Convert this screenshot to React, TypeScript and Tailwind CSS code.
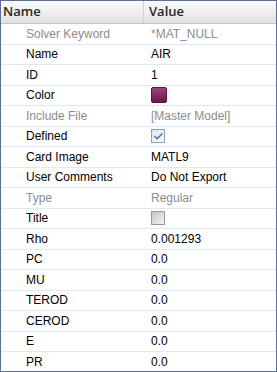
import { Check } from 'lucide-react'

type Row = {
  label: string
  value?: string
  muted?: boolean
  kind?: 'text' | 'color' | 'checked' | 'unchecked'
}

const ROWS: Row[] = [
  { label: 'Solver Keyword', value: '*MAT_NULL', muted: true },
  { label: 'Name', value: 'AIR' },
  { label: 'ID', value: '1' },
  { label: 'Color', kind: 'color' },
  { label: 'Include File', value: '[Master Model]', muted: true },
  { label: 'Defined', kind: 'checked' },
  { label: 'Card Image', value: 'MATL9' },
  { label: 'User Comments', value: 'Do Not Export' },
  { label: 'Type', value: 'Regular', muted: true },
  { label: 'Title', kind: 'unchecked' },
  { label: 'Rho', value: '0.001293' },
  { label: 'PC', value: '0.0' },
  { label: 'MU', value: '0.0' },
  { label: 'TEROD', value: '0.0' },
  { label: 'CEROD', value: '0.0' },
  { label: 'E', value: '0.0' },
  { label: 'PR', value: '0.0' },
]

function ValueCell({ row }: { row: Row }) {
  if (row.kind === 'color') {
    return <div className="w-4 h-4 rounded-[2px] bg-gradient-to-b from-[#a04475] to-[#6b1b47] border border-[#5a1238]" />
  }
  if (row.kind === 'checked') {
    return (
      <div className="w-[14px] h-[14px] border border-[#8e9fb8] bg-gradient-to-br from-[#dfe6f0] to-[#f8fafc] flex items-center justify-center">
        <Check size={11} strokeWidth={3} className="text-[#3273b5]" />
      </div>
    )
  }
  if (row.kind === 'unchecked') {
    return <div className="w-[14px] h-[14px] border border-[#9a9a9a] bg-gradient-to-br from-[#c4c4c4] to-[#f4f4f4]" />
  }
  return <span className={row.muted ? 'text-[#8c8c8c]' : 'text-black'}>{row.value}</span>
}

export default function App() {
  return (
    <div
      className="w-[277px] h-[372px] bg-white border border-[#5d6f99] overflow-hidden flex flex-col text-[12px]"
      style={{ fontFamily: '"Liberation Sans", Arial, sans-serif' }}
    >
      {/* Header */}
      <div className="h-[23px] shrink-0 flex bg-gradient-to-b from-[#fbfbfb] to-[#e2e2e2] border-b border-[#c4c4c4]">
        <div
          className="w-[143px] border-r border-[#d0d0d0] flex items-center pl-[2px] text-[13px] font-semibold text-[#262626]"
          style={{ fontFamily: '"Open Sans", sans-serif' }}
        >
          Name
        </div>
        <div
          className="flex-1 flex items-center pl-[5px] text-[13px] font-semibold text-[#262626]"
          style={{ fontFamily: '"Open Sans", sans-serif' }}
        >
          Value
        </div>
      </div>

      {/* Rows */}
      {ROWS.map(r => (
        <div key={r.label} className="h-[20.5px] shrink-0 flex items-center border-b border-[#dfe8f5]">
          <div className={`w-[143px] pl-[25px] ${r.muted ? 'text-[#8c8c8c]' : 'text-black'}`}>{r.label}</div>
          <div className="flex-1 pl-[7px] flex items-center">
            <ValueCell row={r} />
          </div>
        </div>
      ))}
    </div>
  )
}
